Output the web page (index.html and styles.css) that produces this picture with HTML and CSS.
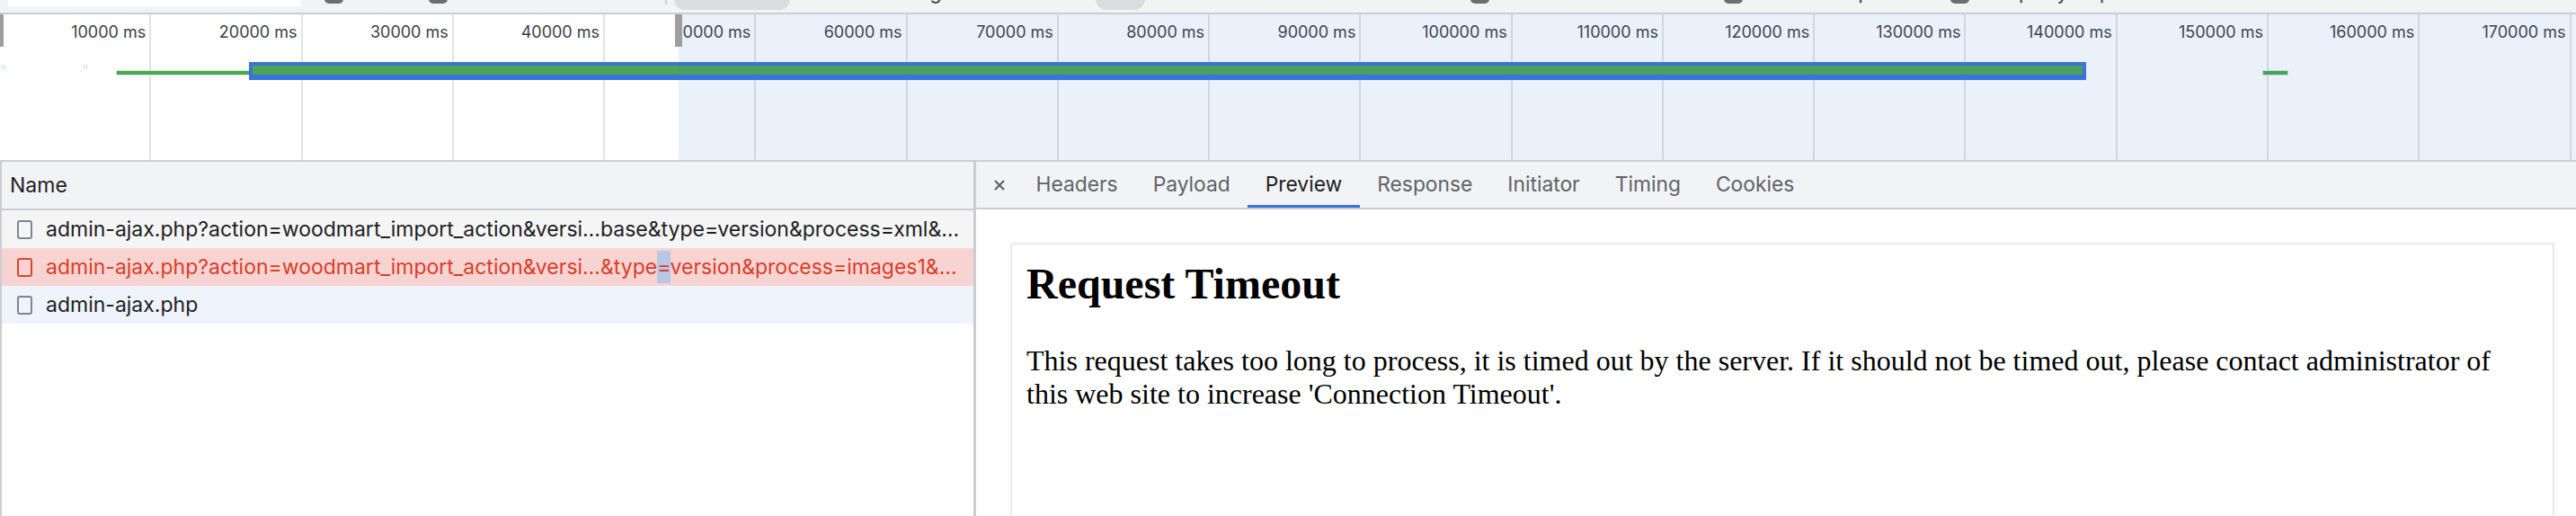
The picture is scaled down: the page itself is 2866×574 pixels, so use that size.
FILE: index.html
```html
<!DOCTYPE html>
<html lang="en">
<head>
    <meta charset="UTF-8">
    <title>Network</title>
    <link rel="stylesheet" href="styles.css">
</head>
<body>
    <div class="filterbar">
        <div class="fb-input">Filter</div>
        <span class="fb-check fb-check-1"></span>
        <span class="fb-label fb-invert">Invert</span>
        <span class="fb-check"></span>
        <span class="fb-label fb-data">Hide data URLs</span>
        <span class="fb-divider"></span>
        <span class="fb-pill fb-pill-wide">Fetch/XHR</span>
        <span class="fb-label fb-types">Img</span>
        <span class="fb-pill fb-pill-small">Doc</span>
        <span class="fb-label fb-gap"></span>
        <span class="fb-check"></span>
        <span class="fb-label fb-ext">Hide extension URLs</span>
        <span class="fb-check"></span>
        <span class="fb-label fb-blocked">Blocked requests</span>
        <span class="fb-check"></span>
        <span class="fb-label">3rd-party requests</span>
    </div>

    <div class="overview">
        <div class="ticks">
            <div class="tick">10000 ms</div>
            <div class="tick">20000 ms</div>
            <div class="tick">30000 ms</div>
            <div class="tick">40000 ms</div>
            <div class="tick">50000 ms</div>
            <div class="tick">60000 ms</div>
            <div class="tick">70000 ms</div>
            <div class="tick">80000 ms</div>
            <div class="tick">90000 ms</div>
            <div class="tick">100000 ms</div>
            <div class="tick">110000 ms</div>
            <div class="tick">120000 ms</div>
            <div class="tick">130000 ms</div>
            <div class="tick">140000 ms</div>
            <div class="tick">150000 ms</div>
            <div class="tick">160000 ms</div>
            <div class="tick">170000 ms</div>
            <div class="tick tick-rest"></div>
        </div>
        <!-- request bars, x from start time -->
        <div class="mark" style="left: 2px;"></div>
        <div class="mark" style="left: 93px;"></div>
        <div class="req req-thin" style="left: 130px; width: 150px;"></div>
        <div class="req req-selected" style="left: 277px; width: 2044px;"></div>
        <div class="req req-thin" style="left: 2518px; width: 27px;"></div>
        <div class="shade"></div>
        <div class="handle handle-start"></div>
        <div class="handle handle-end"></div>
    </div>

    <div class="split">
        <div class="list">
            <div class="list-head">Name</div>
            <div class="row row-odd">
                <span class="file-icon"></span>
                <span>admin-ajax.php?action=woodmart_import_action&amp;versi…base&amp;type=version&amp;process=xml&amp;…</span>
            </div>
            <div class="row row-error">
                <span class="file-icon"></span>
                <span>admin-ajax.php?action=woodmart_import_action&amp;versi…&amp;type<span class="sel">=</span>version&amp;process=images1&amp;…</span>
            </div>
            <div class="row row-selected">
                <span class="file-icon"></span>
                <span>admin-ajax.php</span>
            </div>
        </div>

        <div class="detail">
            <div class="tabs">
                <span class="close">
                    <svg width="14" height="14" viewBox="0 0 14 14">
                        <path d="M2 2 L12 12 M12 2 L2 12" stroke="#5f6368" stroke-width="2.2" fill="none"/>
                    </svg>
                </span>
                <span class="tab">Headers</span>
                <span class="tab">Payload</span>
                <span class="tab tab-active">Preview</span>
                <span class="tab">Response</span>
                <span class="tab">Initiator</span>
                <span class="tab">Timing</span>
                <span class="tab">Cookies</span>
            </div>
            <div class="preview">
                <div class="page">
                    <h1>Request Timeout</h1>
                    <p>This request takes too long to process, it is timed out by the server. If it should not be timed out, please contact administrator of this web site to increase 'Connection Timeout'.</p>
                </div>
            </div>
        </div>
    </div>
</body>
</html>
```

FILE: styles.css
```css
* {
    box-sizing: border-box;
}

html, body {
    margin: 0;
}

body {
    width: 2866px;
    height: 574px;
    overflow: hidden;
    background-color: #fff;
    font-family: Inter, "Liberation Sans", sans-serif;
    color: #202124;
    display: flex;
    flex-direction: column;
}

/* top filter toolbar, only its bottom edge is in view */
.filterbar {
    flex: none;
    height: 16px;
    background-color: #f1f3f4;
    border-bottom: 2px solid #cacdd1;
    display: flex;
    align-items: flex-end;
    overflow: hidden;
    font-size: 22px;
    line-height: 26px;
    color: #3c4043;
    white-space: nowrap;
}

.fb-input {
    margin-left: 9px;
    margin-bottom: 7px;
    width: 325px;
    height: 34px;
    background-color: #fff;
    padding: 0 12px;
    line-height: 30px;
    color: #80868b;
}

.fb-check {
    flex: none;
    width: 21px;
    height: 26px;
    margin-bottom: 10px;
    border-radius: 5px;
    background-color: #6b6e72;
}

.fb-check-1 {
    margin-left: 27px;
}

.fb-label {
    flex: none;
    margin-bottom: 10px;
    padding-left: 10px;
}

.fb-invert { width: 95px; }
.fb-data { width: 242px; }
.fb-ext { width: 261px; }
.fb-blocked { width: 231px; }

.fb-divider {
    flex: none;
    width: 2px;
    height: 30px;
    margin-bottom: 9px;
    background-color: #cacdd1;
}

.fb-pill {
    flex: none;
    height: 34px;
    margin-bottom: 3px;
    border-radius: 12px;
    background-color: #dadce0;
    text-align: center;
    line-height: 22px;
}

.fb-pill-wide {
    margin-left: 8px;
    width: 129px;
}

.fb-types {
    width: 340px;
    padding-left: 130px;
}

.fb-pill-small {
    width: 55px;
}

.fb-gap {
    width: 362px;
}

/* overview timeline */
.overview {
    flex: none;
    position: relative;
    height: 164px;
    border-bottom: 2px solid #cacdd1;
    overflow: hidden;
}

.ticks {
    display: grid;
    grid-template-columns: repeat(17, 168.27px) 1fr;
    height: 100%;
}

.tick {
    border-right: 2px solid #e3e3e3;
    text-align: right;
    padding: 8px 4px 0 0;
    font-size: 18px;
    line-height: 24px;
    color: #3c4043;
}

.tick-rest {
    border-right: none;
}

.mark {
    position: absolute;
    top: 56px;
    width: 4px;
    height: 5px;
    border-left: 1px solid #b7dbee;
    border-right: 1px solid #b7dbee;
}

.req {
    position: absolute;
    background-color: #4ca552;
}

.req-thin {
    top: 63px;
    height: 4px;
    box-shadow: 0 0 0 1px #d3ead5;
}

.req-selected {
    top: 53px;
    height: 20px;
    border: 4px solid #3a73dc;
    border-bottom-width: 6px;
}

.shade {
    position: absolute;
    left: 755px;
    top: 0;
    right: 0;
    bottom: 0;
    background-color: rgba(56, 121, 217, 0.1);
}

.handle {
    position: absolute;
    top: 0;
    width: 8px;
    height: 36px;
    background-color: #9e9e9e;
}

.handle-start {
    left: -4px;
}

.handle-end {
    left: 751px;
    box-shadow: -3px 0 0 #fff;
}

/* lower split: request list + details */
.split {
    flex: 1;
    display: flex;
    min-height: 0;
}

.list {
    flex: none;
    width: 1086px;
    border-left: 2px solid #cacdd1;
    border-right: 3px solid #cacdd1;
}

.list-head {
    height: 54px;
    background-color: #f1f3f4;
    border-bottom: 2px solid #cacdd1;
    padding-left: 9px;
    display: flex;
    align-items: center;
    font-size: 23px;
}

.row {
    height: 42px;
    display: flex;
    align-items: center;
    gap: 15px;
    padding-left: 17px;
    font-size: 23px;
    white-space: nowrap;
    overflow: hidden;
}

.row-odd {
    background-color: #f5f5f5;
}

.row-error {
    background-color: #f7d4d1;
    color: #dc3d2b;
}

.row-selected {
    background-color: #eff3fb;
}

.file-icon {
    flex: none;
    width: 17px;
    height: 21px;
    border: 2px solid #80868b;
    border-radius: 3px;
}

.row-error .file-icon {
    border-color: #e0442f;
}

.sel {
    background-color: #b9c7e4;
    padding: 4px 0;
}

.detail {
    flex: 1;
    min-width: 0;
    display: flex;
    flex-direction: column;
}

.tabs {
    flex: none;
    height: 53px;
    background-color: #f1f3f4;
    border-bottom: 2px solid #cacdd1;
    display: flex;
    padding-left: 19px;
    font-size: 22.8px;
    color: #5f6368;
}

.close {
    display: flex;
    align-items: center;
    margin-right: 14px;
}

.tab {
    display: flex;
    align-items: center;
    padding: 0 19.5px;
    border-bottom: 3px solid transparent;
}

.tab:first-of-type {
    padding-left: 20px;
}

.tab-active {
    color: #202124;
    border-bottom-color: #3a73dc;
}

.preview {
    flex: 1;
    padding: 38px 25px 0 39px;
}

.page {
    height: 400px;
    background-color: #fff;
    border: 1px solid #e3e3e3;
    box-shadow: 0 0 4px rgba(0, 0, 0, 0.12);
    padding: 0 20px 0 16px;
    font-family: "Liberation Serif", serif;
    color: #000;
}

.page h1 {
    font-size: 48px;
    line-height: 56px;
    margin: 16px 0 39px;
}

.page p {
    font-size: 32px;
    line-height: 37px;
    margin: 0;
}
```
